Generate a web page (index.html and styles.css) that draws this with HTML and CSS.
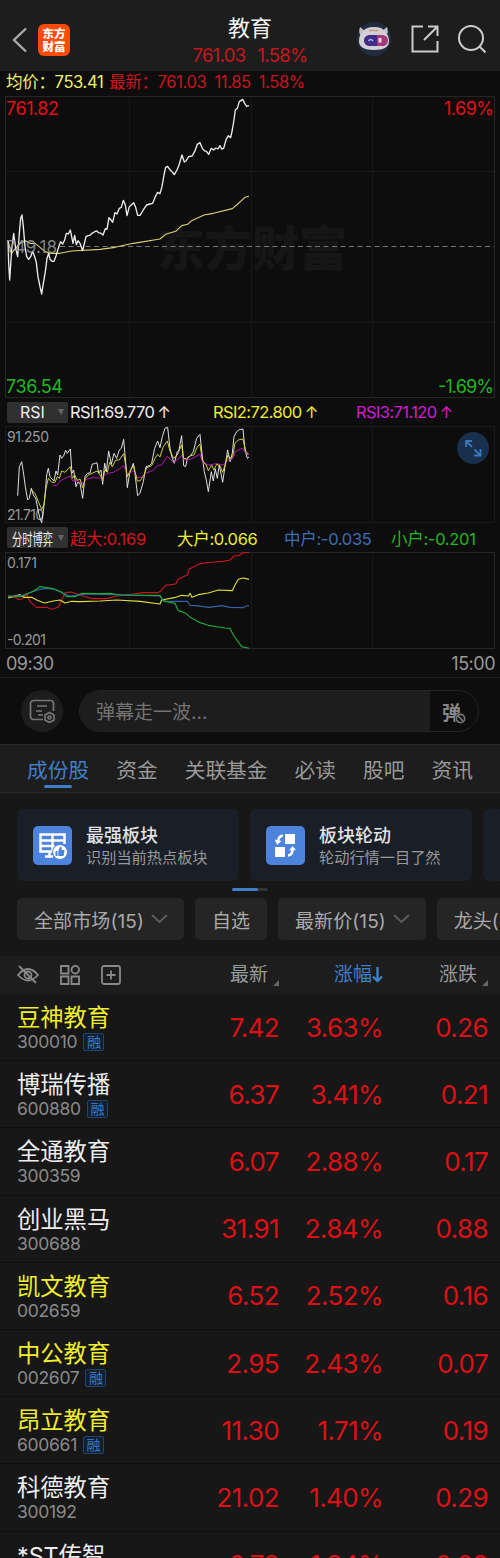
FILE: index.html
```html
<!DOCTYPE html>
<html lang="zh-CN">
<head>
    <meta charset="UTF-8">
    <meta name="viewport" content="width=device-width, initial-scale=1.0">
    <title>教育</title>
    <link rel="stylesheet" href="styles.css">
</head>
<body>
    <header class="header">
        <div class="header-left">
            <svg class="back" width="16" height="26" viewBox="0 0 16 26"><path d="M14 1.500L2 13l12 11.500"/></svg>
            <div class="logo"><span>东方</span><span>财富</span></div>
        </div>
        <div class="header-title">
            <h1>教育</h1>
            <p><span>761.03</span><span>1.58%</span></p>
        </div>
        <div class="header-right">
            <svg width="36" height="36" viewBox="0 0 36 36">
                <circle cx="18" cy="18" r="17" fill="#222c40"/>
                <path d="M4 6q-2 5 1 9l5-4zM31 6q2 5-1 9l-5-4z" fill="#c3c2cc"/>
                <path d="M7 11q2-5 11-5t11 5q4 3 4 9 0 9-15 9T3 20q0-6 4-9z" fill="#d3cfd4"/>
                <path d="M13 9.500h9" stroke="#c99682" stroke-width="1.500"/>
                <rect x="8" y="14" width="23" height="11" rx="5.500" fill="#3e2c86"/>
                <path d="M21 14h5.500a5.500 5.500 0 0 1 0 11H21z" fill="#a33a78"/>
                <path d="M12.500 20q2-3 4.500 0" fill="none" stroke="#a9b4ff" stroke-width="1.500"/>
                <rect x="22.500" y="17" width="3" height="4.500" fill="#fbd5e6"/>
            </svg>
            <svg class="line-icon" width="28" height="28" viewBox="0 0 28 28"><path d="M12 1.500H1.500v25h25V16M17 1.500h9.500V11M26 2L13 15"/></svg>
            <svg class="line-icon" width="28" height="28" viewBox="0 0 28 28"><circle cx="13" cy="13" r="12"/><path d="M21.500 21.500l6 6"/></svg>
        </div>
    </header>

    <section class="quote">
        <div class="avg-line">
            <span class="avg">均价：<b>753.41</b></span>
            <span class="last">最新：<b>761.03</b></span>
            <span class="last">11.85</span>
            <span class="last">1.58%</span>
        </div>

        <svg class="chart" width="500" height="303" viewBox="0 0 500 303">
            <text class="watermark" x="157" y="171">东方财富</text>
            <path class="grid" d="M129.500 1v301M251.500 1v301M372.500 1v301M6 76.500h488M6 227.500h488"/>
            <rect class="frame" x="5.500" y="1.500" width="489" height="301"/>
            <path class="base" d="M60 151.500h434"/>
            <g class="price" transform="translate(0 -5) scale(.3333)">
                <path class="c-avg" d="M24 452L34 490 44 478 60 460 76 452 90 460 105 460 120 472 135 485 150 490 180 490 215 483 300 478 345 472 400 460 480 447 497 433 527 424 545 407 563 403 575 392 612 375 640 370 697 356 710 345 735 322 747 319"/>
                <path class="c-price" d="M24 452L26 520 29 570 35 480 41 430 47 475 53 500 58 430 62 385 66 375 70 410 75 470 80 500 86 508 92 500 98 484 104 500 109 518 114 560 120 590 125 612 130 580 136 545 141 505 146 490 150 508 156 514 162 514 168 498 172 485 178 465 182 455 188 462 194 450 199 430 205 432 211 420 215 440 219 460 224 436 229 464 234 452 240 460 248 482 252 465 258 440 264 437 270 436 276 430 283 426 290 423 296 428 303 430 309 435 316 416 321 418 327 383 333 390 338 397 345 368 351 372 358 355 364 352 370 331 376 345 381 377 388 350 394 345 401 338 407 352 413 376 420 376 430 360 440 345 450 342 458 340 466 320 473 307 480 311 486 290 492 255 497 232 503 229 509 238 516 245 523 254 531 240 537 225 546 195 553 216 558 213 566 200 576 198 584 185 592 163 600 158 607 175 613 182 620 185 626 193 634 175 641 180 648 174 654 177 660 167 665 177 671 175 678 150 685 137 692 143 697 120 702 90 706 60 712 55 718 35 728 28 734 40 740 49 747 47"/>
            </g>
            <text class="mid" x="6" y="158" textLength="51">749.18</text>
            <text class="up" x="6" y="20" textLength="53">761.82</text>
            <text class="up" x="444" y="20" textLength="50">1.69%</text>
            <text class="down" x="6" y="298" textLength="57">736.54</text>
            <text class="down" x="438" y="298" textLength="56">-1.69%</text>
        </svg>

        <div class="indicator">
            <button class="picker">RSI<i></i></button>
            <span class="rsi1">RSI1:69.770<em>↑</em></span>
            <span class="rsi2">RSI2:72.800<em>↑</em></span>
            <span class="rsi3">RSI3:71.120<em>↑</em></span>
        </div>
        <div class="sub-chart">
            <svg class="chart" width="500" height="98" viewBox="0 0 500 98">
                <path class="grid" d="M129.500 1v96M251.500 1v96M372.500 1v96"/>
                <rect class="frame dim" x="5.500" y=".5" width="489" height="96"/>
                <text class="scale" x="7" y="16" textLength="42">91.250</text>
                <text class="scale" x="7" y="93.500" textLength="37">21.710</text>
                <g class="thin" transform="translate(0 -31) scale(.3333)">
                    <path class="c-price" d="M53 302L58 215 65 200 70 230 76 275 83 315 88 310 94 280 100 300 108 312 114 345 120 370 125 383 130 350 136 290 140 240 145 220 150 245 156 252 162 258 168 228 173 240 180 180 185 190 191 182 197 166 202 175 211 162 216 235 221 225 228 275 233 262 240 265 248 310 255 245 262 235 270 234 277 207 283 206 291 203 296 235 303 225 308 268 314 205 319 230 326 168 334 208 342 175 350 190 358 165 364 160 371 133 377 200 382 278 389 235 400 205 406 245 413 302 420 295 430 260 438 215 448 212 455 205 464 160 473 138 480 158 487 125 495 100 503 97 510 160 517 190 523 205 532 170 537 165 545 122 551 212 557 215 563 187 571 183 580 170 590 130 600 118 607 185 613 230 619 255 625 290 634 230 640 258 646 222 652 250 658 210 668 262 675 215 683 165 690 200 697 175 702 125 710 110 718 104 729 102 735 165 742 190 747 186"/>
                    <path class="c-rsi3" d="M158 270L170 272 180 258 195 250 211 243 218 258 235 258 250 265 260 252 280 248 305 250 320 236 340 232 358 222 371 211 382 238 401 228 412 248 425 246 440 234 460 226 473 211 485 210 502 184 521 203 545 182 553 195 575 192 600 178 608 203 625 210 650 206 670 210 683 195 697 193 706 170 727 159 738 175 747 176"/>
                    <path class="c-rsi2" d="M92 283L105 295 115 320 125 343 132 330 138 280 145 250 155 262 165 262 172 245 178 250 185 228 195 232 211 215 217 250 224 240 232 256 240 252 248 278 256 250 265 240 280 233 292 228 300 240 308 254 315 225 322 232 329 202 337 215 347 195 358 195 371 176 377 210 382 245 392 225 401 212 412 258 420 258 432 240 440 218 455 212 465 190 473 178 480 186 490 155 502 138 510 168 521 190 532 180 545 150 551 190 560 192 572 182 582 180 592 155 600 148 607 195 619 210 625 227 635 210 642 225 650 208 660 212 668 232 677 205 684 180 692 192 698 185 705 145 715 135 729 132 737 168 745 180"/>
                </g>
            </svg>
            <button class="expand">
                <svg width="32" height="32" viewBox="0 0 32 32"><path d="M9 15V9h6M9 9l6 6M23.500 17v6.500H17M23.500 23.500L17.500 17.500"/></svg>
            </button>
        </div>

        <div class="indicator flow">
            <button class="picker narrow"><span>分时博弈</span><i></i></button>
            <span class="flow1">超大:0.169</span>
            <span class="flow2">大户:0.066</span>
            <span class="flow3">中户:-0.035</span>
            <span class="flow4">小户:-0.201</span>
        </div>
        <svg class="chart" width="500" height="98" viewBox="0 0 500 98">
            <path class="grid" d="M129.500 1v96M251.500 1v96M372.500 1v96"/>
            <rect class="frame" x="5.500" y=".5" width="489" height="96"/>
            <text class="scale" x="7" y="16" textLength="30">0.171</text>
            <text class="scale" x="7" y="93" textLength="39">-0.201</text>
            <g class="flow-lines" transform="translate(0 -32) scale(.3333)">
                <path class="c-flow1" d="M24 230L45 232 55 238 66 237 80 222 90 245 110 262 140 262 155 268 165 265 175 262 185 240 195 218 215 216 240 225 275 236 320 236 350 228 400 222 430 218 475 218 483 212 497 196 527 192 534 178 563 164 567 148 600 131 640 126 670 124 690 120 702 108 718 106 730 98 747 97"/>
                <path class="c-flow2" d="M24 234L60 224 72 232 95 232 110 240 133 249 160 243 180 240 195 249 215 244 240 245 300 243 350 240 420 244 480 252 485 240 527 232 545 226 565 228 570 220 576 232 595 224 625 219 655 210 697 212 705 195 715 178 730 174 747 178"/>
                <path class="c-flow3" d="M24 230L70 226 95 216 120 208 140 205 165 208 185 218 210 228 260 222 350 224 480 228 487 240 500 244 563 244 570 256 590 257 625 262 665 257 690 262 730 263 738 258 747 257"/>
                <path class="c-flow4" d="M24 228L60 230 75 224 100 214 120 200 160 206 185 216 200 230 225 230 245 220 300 221 330 220 360 225 420 226 480 226 490 243 525 250 535 272 558 280 568 290 600 308 625 316 675 324 690 325 700 345 725 380 747 385"/>
            </g>
        </svg>
        <div class="time-axis"><span>09:30</span><span>15:00</span></div>
    </section>

    <div class="danmu">
        <button class="danmu-set">
            <svg width="26" height="24" viewBox="0 0 26 24"><path d="M14 20.500H4.500a3 3 0 0 1-3-3v-13a3 3 0 0 1 3-3h17a3 3 0 0 1 3 3V12M8 7h10M7 12h6M9 16h5"/><path d="M20.500 13.500l4.500 2.500v5l-4.500 2.500L16 21v-5z"/><circle cx="20.500" cy="18.500" r="1.500"/></svg>
        </button>
        <div class="danmu-box">
            <span class="danmu-input">弹幕走一波...</span>
            <button class="danmu-off">弹<svg width="11" height="11" viewBox="0 0 11 11"><circle cx="5.500" cy="5.500" r="4.200"/><path d="M3 3l5 5"/></svg></button>
        </div>
    </div>

    <nav class="tabs">
        <a class="active">成份股</a>
        <a>资金</a>
        <a>关联基金</a>
        <a>必读</a>
        <a>股吧</a>
        <a>资讯</a>
    </nav>

    <div class="cards">
        <div class="card">
            <svg width="39" height="39" viewBox="0 0 39 39">
                <rect width="39" height="39" rx="5" fill="#4b83dd"/>
                <path d="M20 25.500H7.500V8.500h24V18M7.500 14.500h24M7.500 20h14M19.500 8.500v17M16.500 26v4.500M12 30.500h8" fill="none" stroke="#fff" stroke-width="2.500"/>
                <circle cx="27" cy="26" r="7.500" fill="#fff" stroke="#4b83dd"/>
                <path d="M22.500 25h2v5h-2zM25.300 25l2-4.500q2 0 1.300 3.500h3l-1 6h-5.300z" fill="#4b83dd"/>
            </svg>
            <div class="card-text"><h3>最强板块</h3><p>识别当前热点板块</p></div>
        </div>
        <div class="card">
            <svg width="39" height="39" viewBox="0 0 39 39">
                <rect width="39" height="39" rx="5" fill="#4b83dd"/>
                <path d="M19 8h10v10H19zM9 21h10v10H9z" fill="#fff"/>
                <path d="M17 9.500q-4.500.5-5 6M22 29.500q4.500-.5 4.500-6" fill="none" stroke="#fff" stroke-width="2.500"/>
                <path d="M8.500 13.500l7 1.500-4.200 4zM23 24.500l7-.5-3.500-4z" fill="#fff"/>
            </svg>
            <div class="card-text"><h3>板块轮动</h3><p>轮动行情一目了然</p></div>
        </div>
        <div class="card"></div>
    </div>
    <div class="pager"><i></i></div>

    <div class="filters">
        <button class="drop">全部市场(15)<svg width="17" height="10" viewBox="0 0 17 10"><path d="M1 1l7.500 7L16 1"/></svg></button>
        <button>自选</button>
        <button class="drop">最新价(15)<svg width="17" height="10" viewBox="0 0 17 10"><path d="M1 1l7.500 7L16 1"/></svg></button>
        <button class="more">龙头(</button>
    </div>

    <div class="table-head">
        <div class="tools">
            <svg width="22" height="20" viewBox="0 0 22 20"><path d="M1 10q10-12 20 0Q11 21 1 10zM2 1l17 17"/><circle cx="11" cy="10" r="3.500"/></svg>
            <svg width="20" height="20" viewBox="0 0 20 20"><path d="M1 1h7.500v7.500H1zM1 11.500h7.500V19H1zM11.500 11.500H19V19h-7.500z"/><circle cx="15.300" cy="4.700" r="3.800"/></svg>
            <svg width="20" height="20" viewBox="0 0 20 20"><rect x="1" y="1" width="18" height="18" rx="2"/><path d="M10 5.500v9M5.500 10h9"/></svg>
        </div>
        <span class="col">最新<i></i></span>
        <span class="col sorted">涨幅<svg width="11" height="16" viewBox="0 0 11 16"><path d="M5.500 0v14M1 9.500L5.500 14 10 9.500"/></svg></span>
        <span class="col">涨跌<i></i></span>
    </div>

    <div class="stocks">
        <div class="stock">
            <div class="name own">豆神教育<small>300010<u>融</u></small></div>
            <b>7.42</b><b>3.63%</b><b>0.26</b>
        </div>
        <div class="stock">
            <div class="name">博瑞传播<small>600880<u>融</u></small></div>
            <b>6.37</b><b>3.41%</b><b>0.21</b>
        </div>
        <div class="stock">
            <div class="name">全通教育<small>300359</small></div>
            <b>6.07</b><b>2.88%</b><b>0.17</b>
        </div>
        <div class="stock">
            <div class="name">创业黑马<small>300688</small></div>
            <b>31.91</b><b>2.84%</b><b>0.88</b>
        </div>
        <div class="stock">
            <div class="name own">凯文教育<small>002659</small></div>
            <b>6.52</b><b>2.52%</b><b>0.16</b>
        </div>
        <div class="stock">
            <div class="name own">中公教育<small>002607<u>融</u></small></div>
            <b>2.95</b><b>2.43%</b><b>0.07</b>
        </div>
        <div class="stock">
            <div class="name own">昂立教育<small>600661<u>融</u></small></div>
            <b>11.30</b><b>1.71%</b><b>0.19</b>
        </div>
        <div class="stock">
            <div class="name">科德教育<small>300192</small></div>
            <b>21.02</b><b>1.40%</b><b>0.29</b>
        </div>
        <div class="stock">
            <div class="name">*ST传智</div>
            <b>6.78</b><b>1.34%</b><b>0.09</b>
        </div>
    </div>
</body>
</html>
```
FILE: styles.css
```css
* {
    box-sizing: border-box;
}

body {
    margin: 0;
    width: 500px;
    height: 1558px;
    overflow: hidden;
    background: #171717;
    color: #999;
    font-family: Inter, "Noto Sans CJK SC", sans-serif;
    font-size: 18px;
}

h1, h3, p {
    margin: 0;
    font-weight: 400;
}

button {
    border: 0;
    padding: 0;
    background: none;
    color: inherit;
    font: inherit;
}

i, em, u {
    font-style: normal;
    text-decoration: none;
}

b {
    font-weight: 400;
}

svg {
    display: block;
    flex: none;
}

/* header */
.header {
    display: grid;
    grid-template-columns: 1fr 120px 1fr;
    height: 71px;
    background: #1d1d1d;
}

.header-left {
    display: flex;
    align-items: center;
    gap: 10px;
    padding: 8px 0 0 12px;
}

.back {
    fill: none;
    stroke: #aaa;
    stroke-width: 2.4;
}

.logo {
    display: flex;
    flex-direction: column;
    justify-content: center;
    width: 32px;
    height: 32px;
    border-radius: 6px;
    background: #ff4a0c;
    color: #fff;
    font-family: "Noto Sans CJK SC", sans-serif;
    font-size: 11.5px;
    font-weight: 900;
    line-height: 13px;
    text-align: center;
}

.header-title {
    padding-top: 14px;
    text-align: center;
}

.header-title h1 {
    color: #f2f2f2;
    font-size: 22px;
    line-height: 28px;
}

.header-title p {
    display: flex;
    justify-content: center;
    gap: 12px;
    color: #c8161d;
    font-size: 18.5px;
    line-height: 26px;
    letter-spacing: -0.7px;
}

.header-right {
    display: flex;
    align-items: center;
    justify-content: flex-end;
    gap: 19px;
    padding: 7px 14px 0 0;
}

.line-icon {
    fill: none;
    stroke: #ccc;
    stroke-width: 2;
}

/* quote charts */
.quote {
    height: 607px;
    border-bottom: 1px solid #1e1e1e;
    background: #0d0d0d;
}

.avg-line {
    display: flex;
    height: 24px;
    padding-left: 6px;
    font-size: 16.6px;
    line-height: 22px;
    letter-spacing: -0.4px;
    white-space: nowrap;
}

.avg {
    width: 103px;
    color: #f3ef6a;
}

.last {
    margin-right: 8px;
    color: #c8161d;
}

.chart text {
    font-size: 18px;
}

.chart .watermark {
    fill: #161616;
    font-size: 47.5px;
    font-weight: 900;
}

.grid {
    fill: none;
    stroke: #171717;
}

.frame {
    fill: none;
    stroke: #262626;
}

.frame.dim {
    stroke: #1b1b1b;
}

.base {
    stroke: #777;
    stroke-dasharray: 5 3.5;
}

.chart .mid {
    fill: #999;
    fill-opacity: 0.85;
    font-size: 17px;
}

.chart .scale {
    fill: #999;
    font-size: 14px;
}

.chart .up {
    fill: #e60f14;
}

.chart .down {
    fill: #1fb91f;
}

.chart g path {
    fill: none;
    stroke-linejoin: round;
}

.price path {
    stroke-width: 4;
}

.thin path {
    stroke-width: 2.8;
}

.flow-lines path {
    stroke-width: 3.4;
}

.chart .c-price { stroke: #eee; }
.price .c-avg { stroke: #d9d173; stroke-width: 3.4; }
.chart .c-rsi2 { stroke: #dede32; }
.chart .c-rsi3 { stroke: #c016c0; }
.chart .c-flow1 { stroke: #c8161d; }
.chart .c-flow2 { stroke: #dede42; }
.chart .c-flow3 { stroke: #3563a8; }
.chart .c-flow4 { stroke: #1fa93a; }

.indicator {
    display: grid;
    grid-template-columns: 61px 143px 143px 1fr;
    align-items: center;
    height: 28px;
    padding-left: 7px;
    font-size: 16.5px;
    letter-spacing: -0.6px;
    white-space: nowrap;
}

.indicator > span {
    padding-left: 2px;
}

.indicator em {
    margin-left: 3px;
}

.indicator.flow {
    grid-template-columns: 61px 107px 107px 107px 1fr;
    height: 27px;
    margin-bottom: 1px;
    letter-spacing: -0.3px;
}

.picker {
    display: flex;
    align-items: center;
    justify-content: space-between;
    height: 21px;
    padding: 0 4px 0 13px;
    border-radius: 2px;
    background: #303030;
    color: #eee;
    font-size: 16px;
}

.picker i {
    border: 3.5px solid transparent;
    border-top: 6px solid #666;
    border-bottom: 0;
}

.picker.narrow {
    padding-left: 5px;
}

.picker.narrow span {
    width: 43px;
    white-space: nowrap;
    transform: scaleX(.64);
    transform-origin: 0 50%;
}

.rsi1 { color: #eee; }
.rsi2, .flow2 { color: #f0ee2c; }
.rsi3 { color: #d31bd3; }
.flow1 { color: #d8151b; }
.flow3 { color: #3d6eb4; }
.flow4 { color: #1fb91f; }

.sub-chart {
    position: relative;
}

/* round button lies over the chart corner */
.expand {
    position: absolute;
    top: 6px;
    right: 11px;
    border-radius: 50%;
    background: #18304d;
}

.expand path {
    fill: none;
    stroke: #3c76bd;
    stroke-width: 1.8;
}

.time-axis {
    display: flex;
    justify-content: space-between;
    padding: 1px 5px 0 6px;
    font-size: 18px;
    line-height: 26px;
    letter-spacing: -0.5px;
}

/* danmu */
.danmu {
    display: flex;
    align-items: center;
    gap: 16px;
    height: 66px;
    padding: 0 21px;
    background: #0d0d0d;
}

.danmu-set {
    display: flex;
    align-items: center;
    justify-content: center;
    width: 42px;
    height: 42px;
    border-radius: 50%;
    background: #1d1d1d;
}

.danmu-set svg,
.danmu-off svg {
    fill: none;
    stroke: #777;
    stroke-width: 1.7;
}

.danmu-box {
    display: flex;
    flex: 1;
    height: 42px;
    border: 1px solid #232323;
    border-radius: 21px;
    overflow: hidden;
}

.danmu-input {
    flex: 1;
    padding-left: 16px;
    background: #1d1d1d;
    color: #737373;
    font-size: 19px;
    line-height: 43px;
}

.danmu-off {
    display: flex;
    align-items: center;
    width: 48px;
    padding-left: 12px;
    color: #888;
    font-size: 19px;
    font-weight: 700;
}

.danmu-off svg {
    margin: 15px 0 0 -6px;
    border-radius: 50%;
    background: #0d0d0d;
}

/* tabs */
.tabs {
    display: flex;
    justify-content: space-between;
    height: 49px;
    padding: 0 27px;
    border-top: 1px solid #292929;
    border-bottom: 1px solid #292929;
    background: #1d1d1d;
    font-size: 20.7px;
    line-height: 51px;
}

.tabs .active {
    position: relative;
    color: #3f7fc9;
}

.tabs .active::after {
    content: "";
    position: absolute;
    left: 17px;
    bottom: 4px;
    width: 28px;
    height: 3px;
    border-radius: 2px;
    background: #3f7fc9;
}

/* cards */
.cards {
    display: flex;
    gap: 11px;
    padding: 16px 0 0 17px;
    overflow: hidden;
}

.card {
    display: flex;
    flex: none;
    gap: 14px;
    align-items: center;
    width: 222px;
    height: 72px;
    padding-left: 16px;
    border-radius: 6px;
    background: #1a1f27;
}

.card h3 {
    padding-top: 1px;
    color: #e2e2e2;
    font-size: 18px;
    font-weight: 500;
    line-height: 23px;
}

.card p {
    font-size: 15.2px;
    line-height: 21px;
}

.pager {
    width: 36px;
    height: 3px;
    margin: 7px auto 0;
    border-radius: 2px;
    background: #333;
}

.pager i {
    display: block;
    width: 26px;
    height: 3px;
    border-radius: 2px;
    background: #3f7fc9;
}

/* filters */
.filters {
    display: flex;
    gap: 11px;
    padding: 7px 0 16px 17px;
    color: #aaa;
    font-size: 19px;
    white-space: nowrap;
    overflow: hidden;
}

.filters button {
    flex: none;
    height: 42px;
    padding: 0 17px;
    border-radius: 5px;
    background: #252525;
}

.filters .drop {
    display: flex;
    align-items: center;
    gap: 7px;
    padding-right: 16px;
    letter-spacing: 0.1px;
}

.filters .more {
    border-radius: 5px 0 0 5px;
}

.filters path {
    fill: none;
    stroke: #5c5c5c;
    stroke-width: 2;
}

/* list */
.table-head,
.stock {
    display: grid;
    grid-template-columns: 180px 99px 104px 105px;
    align-items: center;
}

.table-head {
    height: 38px;
    padding-bottom: 1px;
    background: #1d1d1d;
    font-size: 19px;
    line-height: 26px;
}

.tools {
    display: flex;
    gap: 21px;
    padding-left: 17px;
}

.tools svg {
    fill: none;
    stroke: #8a8a8a;
    stroke-width: 1.8;
}

.col {
    display: flex;
    justify-content: flex-end;
}

.col i {
    align-self: flex-end;
    margin: 0 0 2px 5px;
    border: 3.5px solid #666;
    border-top-color: transparent;
    border-left-color: transparent;
}

.sorted {
    color: #3f7fc9;
}

.sorted svg {
    align-self: center;
    fill: none;
    stroke: #3f7fc9;
    stroke-width: 2.4;
}

.stock {
    height: 67.2px;
    border-bottom: 1px solid #101010;
}

.stock b {
    color: #de1015;
    font-size: 26px;
    letter-spacing: -0.6px;
    text-align: right;
}

.name {
    align-self: start;
    padding: 10px 0 0 17px;
    color: #eee;
    font-size: 23.3px;
    line-height: 27px;
}

.name.own {
    color: #f0ee2c;
}

.name small {
    display: flex;
    align-items: center;
    gap: 6px;
    color: #8a8a8a;
    font-size: 17.5px;
    line-height: 22px;
    letter-spacing: -0.3px;
}

.name u {
    width: 21px;
    height: 18px;
    border: 1px solid #1f4672;
    border-radius: 2px;
    background: #131f2e;
    color: #3a78c0;
    font-size: 14px;
    line-height: 16px;
    text-align: center;
}
```
